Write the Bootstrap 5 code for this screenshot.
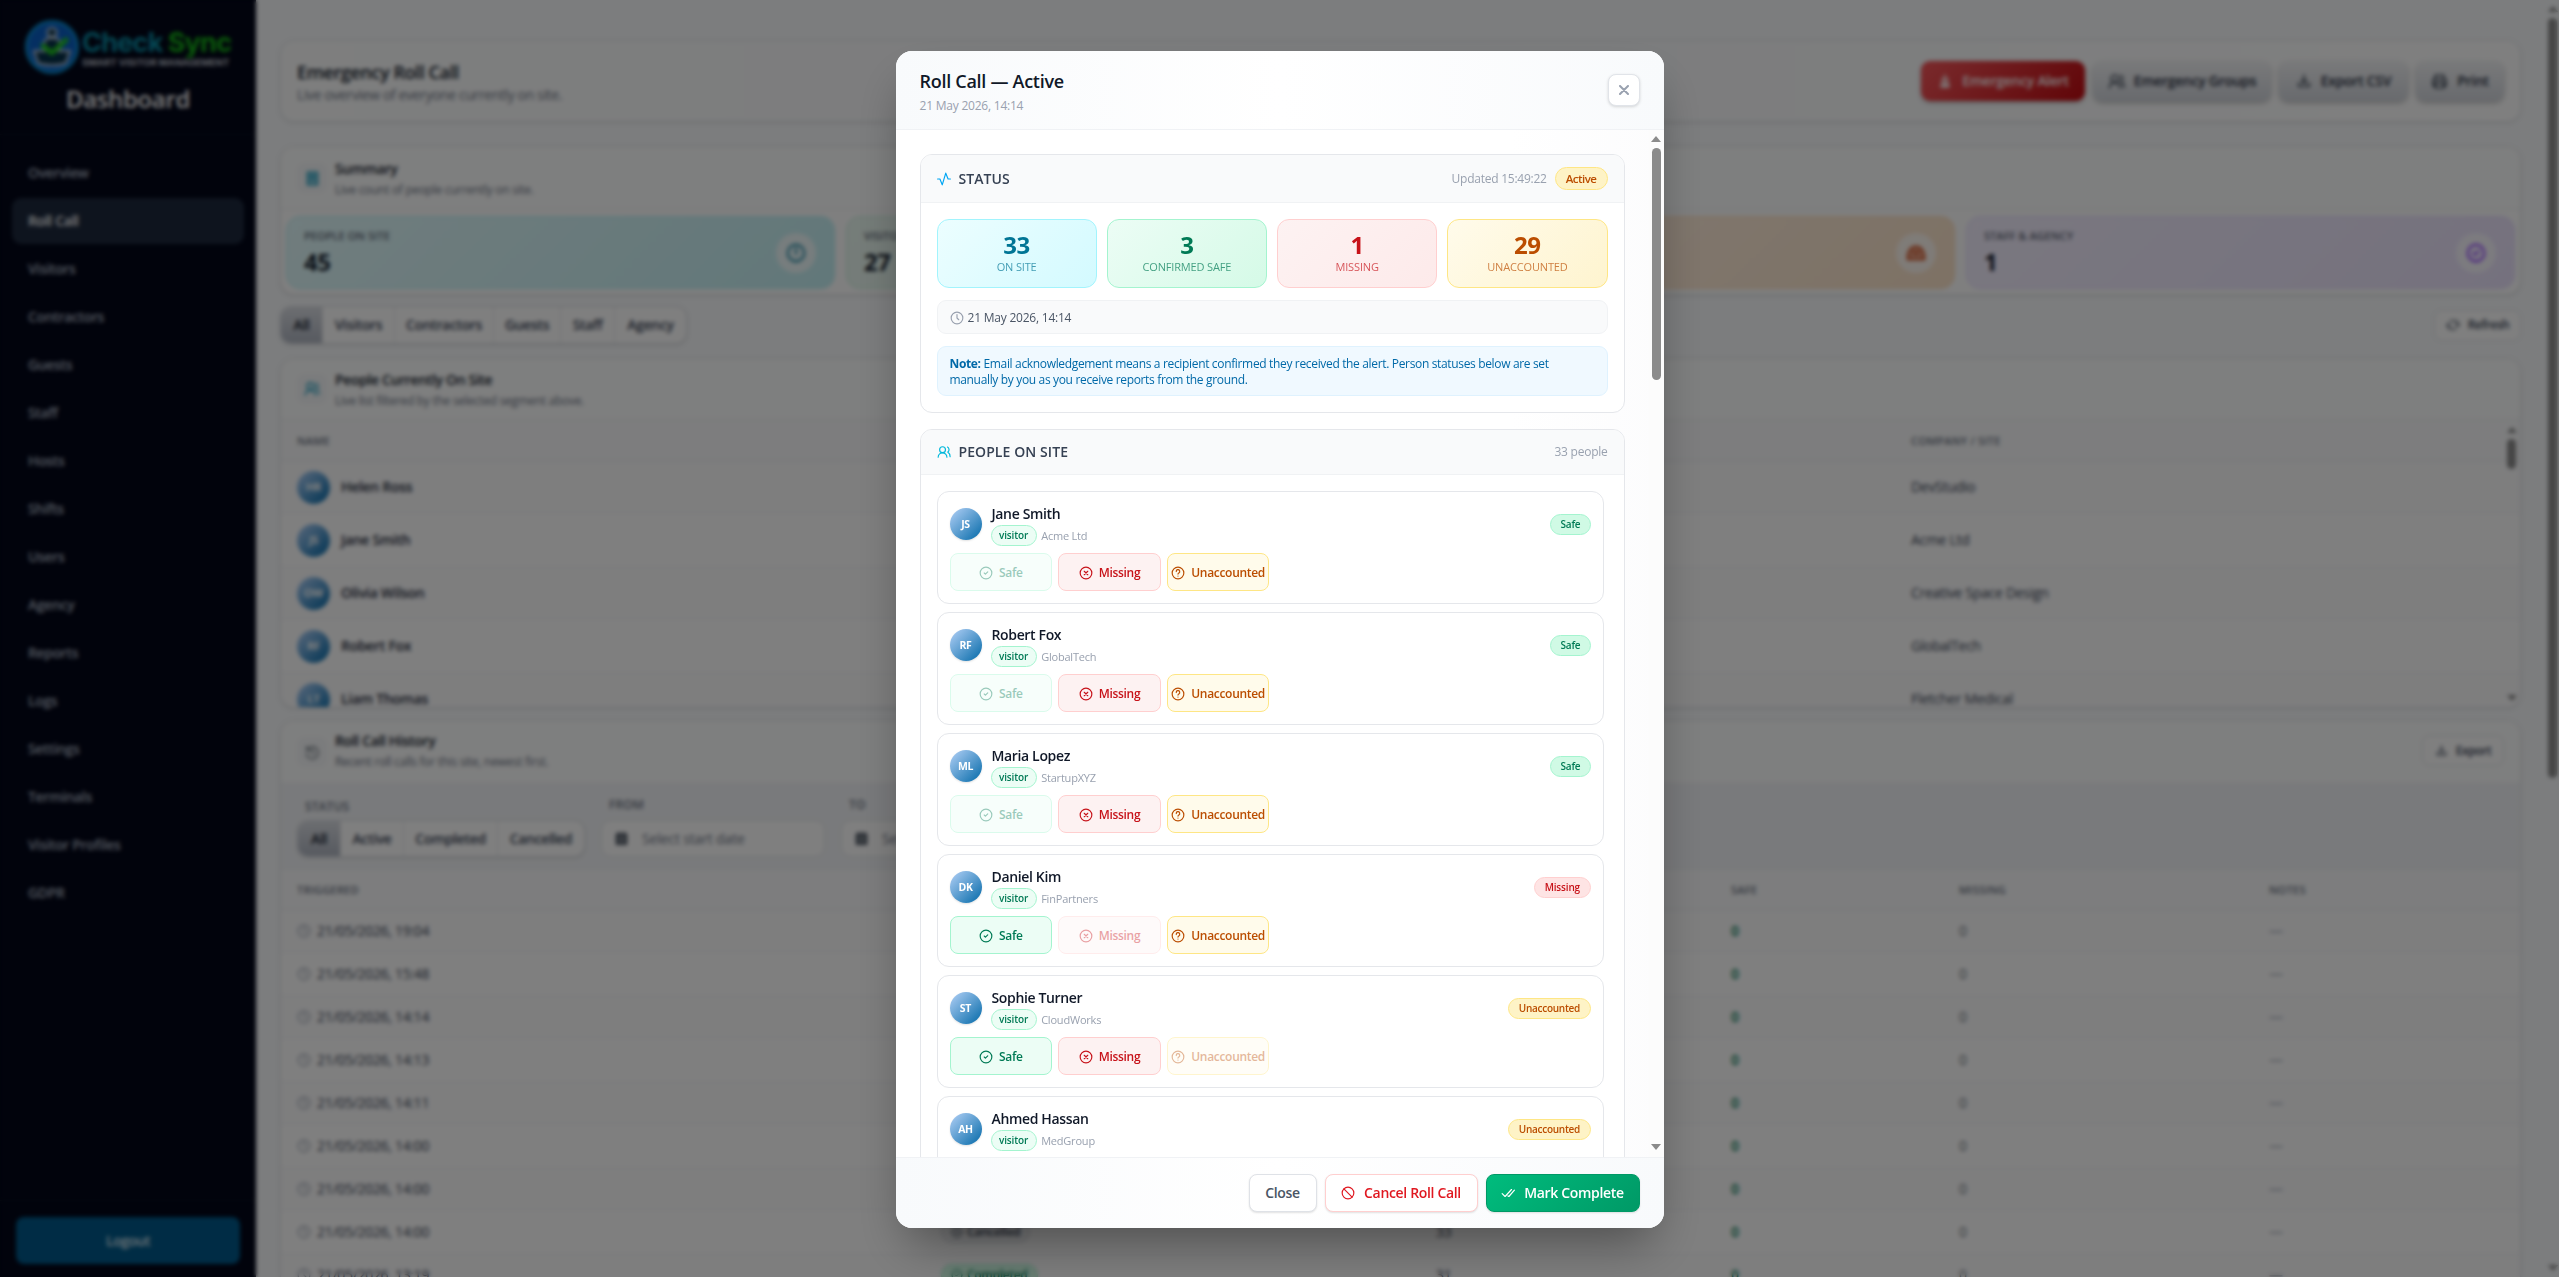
<!DOCTYPE html>
<html lang="en">
<head>
<meta charset="utf-8">
<meta name="viewport" content="width=device-width, initial-scale=1">
<title>Roll Call</title>
<link href="https://cdn.jsdelivr.net/npm/bootstrap@5.3.0/dist/css/bootstrap.min.css" rel="stylesheet">
<style>
:root{--ink:#101828;--mut:#99a1af;--line:#e5e7eb}
html,body{height:100%;overflow:hidden}
body{font-family:"Open Sans","Noto Sans",sans-serif;font-size:14px;line-height:20px;color:var(--ink);background:#f8fafc;letter-spacing:-.3px}
svg{flex:none;fill:none;stroke:currentColor;stroke-width:2;stroke-linecap:round;stroke-linejoin:round}
.fw-6{font-weight:600}
/* sidebar */
.side{width:256px;background:#020618;color:#cad5e2}
.side-top{height:135px;border-bottom:1px solid #0b1222;padding-top:20px}
.logo-name{font:700 27px/28px Inter,sans-serif;letter-spacing:-.75px;white-space:nowrap}
.logo-tag{font:700 9.5px/12px Inter,sans-serif;color:#b9bec8;white-space:nowrap;letter-spacing:-.05px}
.side-title{font-size:24px;line-height:32px;color:#fff;letter-spacing:-.35px}
.side-nav{padding:15px 12px 0;gap:2px}
.side-nav a{height:46px;line-height:46px;padding:0 16px;border-radius:9px;color:#aab4c3;text-decoration:none;font-weight:600;letter-spacing:-.35px}
.side-nav a.on{background:#1d293d;color:#fff}
.side-foot{height:77px;border-top:1px solid #0b1222;padding:16px}
.btn-out{height:47px;background:#00598a;color:#dce6ee;border-radius:8px;font-weight:600;width:100%;font-size:14px;letter-spacing:-.5px}
/* page */
.page{padding:40px 38px 0 24px}
.panel{background:#fff;border:1px solid var(--line);border-radius:14px;box-shadow:0 1px 3px rgba(0,0,0,.12);overflow:hidden}
.hero{height:82px;padding:0 16px;background:linear-gradient(90deg,#fcfdfd,#f8fafc 50%,#fff)}
.hero h1{font-size:18px;line-height:26px;margin:1px 0 0;font-weight:600;letter-spacing:-.4px}
.sub{color:#6a7282;line-height:20px;letter-spacing:-.38px}
.gbtn{height:40px;border-radius:9px;display:flex;align-items:center;gap:9px;font-weight:600;padding:0 15px;background:linear-gradient(#f3f4f6,#d1d5dc);color:#1e2939;box-shadow:0 2px 4px rgba(0,0,0,.25);justify-content:center;white-space:nowrap}
.gbtn.red{background:linear-gradient(135deg,#f4565a,#c10a10);color:#fff}
.ph{background:#fdfefe;border-bottom:1px solid #eef0f3;padding:0 16px}
.ph h2{font-size:14px;line-height:22px;font-weight:600;margin:0;letter-spacing:-.35px}
.ph .sub{font-size:12px;line-height:20px;letter-spacing:-.3px}
.pic{width:30px;height:30px;border-radius:8px;background:#f6f8fa;display:grid;place-items:center;color:#0092b8}
.stat{height:73px;border-radius:14px;border:1px solid;padding:0 18px 0 17px;flex:1}
.stat small{font-size:11px;line-height:16px;color:#5a6272;letter-spacing:.05px;font-weight:600;display:block;padding-top:2px}
.stat b{font-size:24px;line-height:36px;display:block;letter-spacing:-.5px}
.rnd{width:40px;height:40px;border-radius:50%;background:rgba(255,255,255,.7);display:grid;place-items:center}
.seg{height:38px;border:1px solid #d9dde3;border-radius:11px;overflow:hidden;background:#fff;box-shadow:0 1px 3px rgba(0,0,0,.15)}
.seg span{display:grid;place-items:center;font-weight:600;color:#364153;border-right:1px solid var(--line);letter-spacing:-.35px}
.seg span:last-child{border:0}
.seg .on{background:linear-gradient(#d9dce2,#aeb4c0);color:var(--ink)}
.obtn{border:1px solid #dfe2e7;border-radius:8px;background:#fff;height:31px;font-size:12px;font-weight:600;display:flex;align-items:center;justify-content:center;gap:8px;color:#364153;letter-spacing:-.4px}
.th-row{height:41px;background:#fafbfc;border-bottom:1px solid #e9ebef;font-size:11px;font-weight:600;color:#6a7282;padding:1px 16px 0;letter-spacing:.2px}
.tr-row{height:53px;padding:0 16px;border-bottom:1px solid #f3f4f6;color:#364153}
.tr-row:nth-child(odd){background:#fcfcfd}
.ava{width:33px;height:33px;border-radius:50%;background:linear-gradient(135deg,#b3d1f7,#0369a8);color:#fff;font-size:11px;font-weight:700;display:grid;place-items:center;letter-spacing:-.3px;flex:none}
.h-row{height:43px;padding:0 16px;border-bottom:1px solid #f3f4f6;color:#364153}
.h-row:nth-child(odd){background:#fcfcfd}
.c1{width:644px}.c2{width:495px}.c3{width:295px}.c4{width:228px}.c5{width:310px}
.chip{border:1px solid #d7dbe1;border-radius:12px;font-size:12px;line-height:20px;padding:0 9px;background:#f3f4f6;font-weight:600;display:inline-flex;align-items:center;gap:4px}
.chip.ok{background:#d0fae5;border-color:#a4f4cf;color:#007a55}
.filt{height:85px;background:#f3f5f8;border-bottom:1px solid #e9ebef;padding:13px 16px 0;gap:16px}
.filt label{font-size:12px;line-height:16px;color:#6a7282;font-weight:600;display:block;letter-spacing:.1px;margin-bottom:7px}
.inp{width:224px;height:37px;border:1px solid #dfe2e7;border-radius:10px;background:#fff;color:#6a7282;padding:0 12px;gap:13px;letter-spacing:-.15px}
.bar{background:#8b8b8b;border-radius:6px;width:9px}
.up,.dn{width:0;height:0;border:5px solid transparent}
.up{border-bottom:6px solid #8b8b8b;border-top:0}
.dn{border-top:6px solid #8b8b8b;border-bottom:0}
.page-bar{position:absolute;right:1px;top:6px;bottom:6px;width:11px}
.list-bar{position:absolute;right:3px;top:7px;bottom:7px;width:11px}
/* dialog */
.veil{background:rgba(0,0,0,.5);backdrop-filter:blur(2px);-webkit-backdrop-filter:blur(2px)}
.modal-content.dlg{width:768px;height:1177px;border:0;border-radius:16px;overflow:hidden;box-shadow:0 25px 50px -12px rgba(0,0,0,.4);color:var(--ink);margin:51px auto 0}
.dlg-head{height:79px;padding:0 24px;border-bottom:1px solid #f0f2f5;background:linear-gradient(90deg,#f8fafc,#fff 50%,#f8fafc)}
.dlg-head h5{font-size:18px;line-height:25px;font-weight:600;margin:3px 0 0;letter-spacing:-.28px}
.dlg-head p{font-size:12px;line-height:18px;color:var(--mut);margin:3px 0 0;letter-spacing:-.22px}
.xbtn{width:32px;height:32px;border:1px solid #e1e4e9;border-radius:8px;background:#fff;display:grid;place-items:center;color:var(--mut);box-shadow:0 1px 3px rgba(0,0,0,.15)}
.dlg-body{height:1027px;overflow:hidden;background:linear-gradient(90deg,#fff 80%,#fcfcfd)}
.dlg-col{padding:24px;width:753px}
.dlg-track{width:15px;background:#fcfcfc;padding:6px 0 7px}
.box{border:1px solid var(--line);border-radius:12px;overflow:hidden;background:#fff}
.box-h{height:48px;background:#f9fafb;border-bottom:1px solid #f0f2f4;padding:0 16px}
.box-h h6{font-size:14px;line-height:20px;font-weight:600;color:#364153;margin:0;letter-spacing:.08px}
.mute{font-size:12px;color:var(--mut);letter-spacing:-.25px}
.tile{height:69px;border:1px solid;border-radius:12px;flex:1;text-align:center;padding-top:9px}
.tile b{display:block;font-size:24px;line-height:32px;letter-spacing:-.3px}
.tile span{display:block;font-size:11px;line-height:12px;letter-spacing:-.15px;font-weight:500;opacity:.7}
.t-c{background:linear-gradient(135deg,#ecfeff,#d3faff);border-color:#a2f4fd;color:#007595}
.t-g{background:linear-gradient(135deg,#ecfdf5,#d5fae7);border-color:#a4f4cf;color:#007a55}
.t-r{background:linear-gradient(135deg,#fdf2f2,#fdeaea);border-color:#ffcfcf;color:#c71219}
.t-y{background:linear-gradient(135deg,#fffbeb,#fef4cf);border-color:#fee685;color:#bb4d00}
.when{height:34px;margin-top:12px;border:1px solid #f0f2f4;border-radius:9px;background:#f9fafb;padding:1px 12px 0;gap:4px;font-size:12px;color:#4a5565;letter-spacing:-.22px}
.note{height:50px;margin-top:12px;border:1px solid #dff2fe;border-radius:9px;background:#f0f9ff;padding:9px 12px;font-size:12px;line-height:16px;color:#0069a8;letter-spacing:-.34px}
.note b{font-weight:700}
.pcard{height:113px;border:1px solid var(--line);border-radius:12px;padding:16px 12px 0;margin-bottom:8px;background:#fff}
.pcard .ava{width:32px;height:32px;font-size:10.5px;box-shadow:0 1px 2px rgba(0,0,0,.12)}
.pname{font-weight:600;line-height:18px;letter-spacing:-.35px;margin-top:-3px}
.pill{border:1px solid;border-radius:11px;height:21px;line-height:19px;font-size:10px;font-weight:600;padding:0 7.5px;letter-spacing:-.15px;display:block}
.pill.sm-y{height:23px;line-height:21px;font-size:11.5px;padding:0 10px;border-radius:12px;letter-spacing:-.5px}
.p-role{background:#ecfdf5;border-color:#a4f4cf;color:#007a55}
.p-safe{background:#d0fae5;border-color:#a4f4cf;color:#007a55;padding:0 9px}
.p-miss{background:#fee4e4;border-color:#ffcfcf;color:#c71219;padding:0 9.5px}
.p-un{background:#fef3c6;border-color:#fee685;color:#bb4d00;padding:0 9.5px;letter-spacing:-.28px}
.co{font-size:11px;color:var(--mut);letter-spacing:-.2px;font-weight:400}
.act{width:102.5px;height:38px;border:1px solid;border-radius:8px;font-size:12px;font-weight:600;gap:6px;letter-spacing:-.3px;margin-right:6.2px;padding-top:1px}
.a-s{background:#ecfdf5;border-color:#a4f4cf;color:#007a55}
.a-m{background:#fdf2f2;border-color:#ffcfcf;color:#c71219}
.a-u{background:#fffbeb;border-color:#fee685;color:#bb4d00}
.off{opacity:.4}
.dlg-foot{height:71px;padding:0 24px;gap:8px;border-top:1px solid #f0f2f5;background:linear-gradient(90deg,#f8fafc,#fff 50%,#f8fafc)}
.fbtn{height:38px;border:1px solid #dfe2e7;border-radius:8px;background:#fff;font-weight:600;color:#4a5565;display:flex;align-items:center;justify-content:center;gap:9px;box-shadow:0 1px 2px rgba(0,0,0,.12);white-space:nowrap;letter-spacing:-.33px}
</style>
<script src="https://cdn.jsdelivr.net/npm/bootstrap@5.3.0/dist/js/bootstrap.bundle.min.js"></script>
</head>
<body>
<svg width="0" height="0" class="position-absolute">
  <defs>
    <symbol id="clock" viewBox="0 0 24 24"><circle cx="12" cy="12" r="10"/><path d="M12 6v6l3 3"/></symbol>
    <symbol id="people" viewBox="0 0 24 24"><path d="M17 21a7.5 7.5 0 0 0-15 0"/><circle cx="9.5" cy="8" r="5"/><path d="M22.500 20c0-3.500-2-6.500-4-8a5 5 0 0 0-.5-8.500"/></symbol>
    <symbol id="dl" viewBox="0 0 24 24"><path d="M12 3v12m-4-4 4 4 4-4M4 15v5h16v-5"/></symbol>
    <symbol id="ok" viewBox="0 0 24 24"><circle cx="12" cy="12" r="10"/><path d="m9 12 2 2 4-4"/></symbol>
    <symbol id="no" viewBox="0 0 24 24"><circle cx="12" cy="12" r="10"/><path d="m9 9 6 6m0-6-6 6"/></symbol>
    <symbol id="ask" viewBox="0 0 24 24"><circle cx="12" cy="12" r="10"/><path d="M9 9.500a3 3 0 1 1 4.500 2.300c-1 .600-1.500 1-1.500 2M12 17.200v.1"/></symbol>
    <symbol id="cal" viewBox="0 0 24 24"><path fill="currentColor" fill-opacity=".6" d="M4 5h16v16H4z"/><path d="M8 2v4m8-4v4"/></symbol>
  </defs>
</svg>

<div class="d-flex h-100 position-relative">
  <aside class="side d-flex flex-column flex-shrink-0">
    <div class="side-top">
      <div class="d-flex" style="padding-left:25px;gap:3px">
        <svg width="54" height="54" viewBox="0 0 54 54" stroke="none"><circle cx="27" cy="27" r="25.500" fill="#0b5fc4" stroke="#0a8fd0" stroke-width="3"/><circle cx="27" cy="12.500" r="4.500" fill="#06304a"/><path fill="#06304a" d="M19 25c0-6 3-7 8-7s8 1 8 7v6H19zM9 31h36l-4 12c-6 3-22 3-28 0z"/><path d="m18 26 9 7 14-13" fill="none" stroke="#1fc41f" stroke-width="5"/></svg>
        <div style="padding-top:9px"><div class="logo-name"><span style="color:#0b8fa8">Check</span><span style="color:#15b415;margin-left:5px">Sync</span></div><div class="logo-tag">SMART VISITOR MANAGEMENT</div></div>
      </div>
      <div class="side-title text-center fw-6" style="margin-top:9px">Dashboard</div>
    </div>
    <nav class="side-nav d-flex flex-column flex-grow-1" id="nav"></nav>
    <div class="side-foot"><button class="btn btn-out">Logout</button></div>
  </aside>

  <main class="page flex-grow-1">
    <section class="panel hero d-flex align-items-center justify-content-between">
      <div><h1>Emergency Roll Call</h1><div class="sub">Live overview of everyone currently on site.</div></div>
      <div class="d-flex gap-2">
        <div class="gbtn red" style="width:164px"><svg width="16" height="16" viewBox="0 0 24 24"><path fill="currentColor" fill-opacity=".5" d="M8 18v-7a4 4 0 0 1 8 0v7M6 21h12v-3H6zM12 2v2"/></svg>Emergency Alert</div>
        <div class="gbtn" style="width:178px"><svg width="17" height="17"><use href="#people"/></svg>Emergency Groups</div>
        <div class="gbtn" style="width:129px"><svg width="16" height="16"><use href="#dl"/></svg>Export CSV</div>
        <div class="gbtn" style="width:88px"><svg width="17" height="17" viewBox="0 0 24 24"><path d="M6 9V3h12v6M6 18H3V9h18v9h-3M6 14h12v7H6z"/></svg>Print</div>
      </div>
    </section>

    <section class="panel" style="margin-top:24px;height:149px">
      <div class="ph d-flex align-items-center gap-3" style="height:63px">
        <div class="pic"><svg width="17" height="17" viewBox="0 0 24 24"><path fill="currentColor" fill-opacity=".4" d="M5 3h14v18H5z"/><path d="M9 8h6M9 13h6"/></svg></div>
        <div style="margin-left:-8px;padding-top:1px"><h2>Summary</h2><div class="sub">Live count of people currently on site.</div></div>
      </div>
      <div class="d-flex" style="gap:11px;padding:6px 5px" id="stats"></div>
    </section>

    <div class="d-flex justify-content-between align-items-center" style="margin:11px 0 14px">
      <div class="seg d-flex"><span class="on" style="width:42px">All</span><span style="width:72px">Visitors</span><span style="width:99px">Contractors</span><span style="width:67px">Guests</span><span style="width:54px">Staff</span><span style="width:71px">Agency</span></div>
      <div class="obtn" style="width:87px"><svg width="14" height="14" viewBox="0 0 24 24"><path d="M7 5h10a3 3 0 0 1 3 3v6m-3-3 3 3 3-3M17 19H7a3 3 0 0 1-3-3v-6m-3 3 3-3 3 3"/></svg>Refresh</div>
    </div>

    <section class="panel" style="height:350px">
      <div class="ph d-flex align-items-center gap-3" style="height:61px">
        <div class="pic"><svg width="16" height="16"><use href="#people"/></svg></div>
        <div style="margin-left:-8px;padding-top:1px"><h2>People Currently On Site</h2><div class="sub">Live list filtered by the selected segment above.</div></div>
      </div>
      <div class="position-relative" style="height:288px">
        <div class="th-row d-flex align-items-center"><div style="width:1614px">NAME</div><div>COMPANY / SITE</div></div>
        <div id="on-site"></div>
        <div class="list-bar d-flex flex-column align-items-center"><i class="up"></i><i class="bar" style="height:30px;margin-top:6px"></i><i class="dn mt-auto"></i></div>
      </div>
    </section>

    <section class="panel" style="height:620px;margin-top:12px">
      <div class="ph d-flex align-items-center gap-3" style="height:63px">
        <div class="pic text-secondary"><svg width="16" height="16" viewBox="0 0 24 24"><path d="M4 4v5h5M4.500 9a9 9 0 1 1-1 5M12 8v5l3 2"/></svg></div>
        <div style="margin:-2px 0 0 -8px"><h2>Roll Call History</h2><div class="sub">Recent roll calls for this site, newest first.</div></div>
        <div class="obtn ms-auto" style="width:82px;margin-top:-3px"><svg width="13" height="13"><use href="#dl"/></svg>Export</div>
      </div>
      <div class="filt d-flex">
        <div><label style="padding:2px 0 0 8px;margin-bottom:5px">STATUS</label><div class="seg d-flex" style="height:37px"><span class="on" style="width:43px">All</span><span style="width:63px">Active</span><span style="width:94px">Completed</span><span style="width:86px">Cancelled</span></div></div>
        <div><label style="padding-left:8px">FROM</label><div class="inp d-flex align-items-center"><svg width="15" height="15" color="#1e2939"><use href="#cal"/></svg>Select start date</div></div>
        <div><label style="padding-left:8px">TO</label><div class="inp d-flex align-items-center"><svg width="15" height="15" color="#1e2939"><use href="#cal"/></svg>Select end date</div></div>
      </div>
      <div class="th-row d-flex align-items-center"><div class="c1">TRIGGERED</div><div class="c2">STATUS</div><div class="c3">TOTAL</div><div class="c4">SAFE</div><div class="c5">MISSING</div><div>NOTES</div></div>
      <div id="history"></div>
    </section>
  </main>
  <div class="page-bar d-flex flex-column align-items-center"><i class="up"></i><i class="bar" style="height:760px;margin-top:6px"></i><i class="dn mt-auto"></i></div>
</div>

<div class="modal d-block veil overflow-hidden">
  <div class="modal-content dlg">
    <div class="dlg-head d-flex align-items-center justify-content-between">
      <div><h5>Roll Call — Active</h5><p>21 May 2026, 14:14</p></div>
      <div class="xbtn"><svg width="10" height="10" viewBox="0 0 10 10" stroke-width="1.200"><path d="m1 1 8 8M9 1 1 9"/></svg></div>
    </div>
    <div class="dlg-body d-flex">
      <div class="dlg-col">
        <div class="box" style="height:259px">
          <div class="box-h d-flex align-items-center">
            <svg width="14" height="14" viewBox="0 0 24 24" color="#00a6f4" style="margin-right:8px"><path d="M1 12h4l4 10 6-20 4 10h4"/></svg><h6>STATUS</h6>
            <span class="mute ms-auto" style="margin-right:8px">Updated 15:49:22</span><span class="pill sm-y p-un">Active</span>
          </div>
          <div style="padding:16px">
            <div class="d-flex" style="gap:10px">
              <div class="tile t-c"><b>33</b><span>ON SITE</span></div>
              <div class="tile t-g"><b>3</b><span>CONFIRMED SAFE</span></div>
              <div class="tile t-r"><b>1</b><span>MISSING</span></div>
              <div class="tile t-y"><b>29</b><span>UNACCOUNTED</span></div>
            </div>
            <div class="when d-flex align-items-center"><svg width="14" height="14" stroke-width="1.600" color="#99a1af"><use href="#clock"/></svg>21 May 2026, 14:14</div>
            <div class="note"><b>Note:</b> Email acknowledgement means a recipient confirmed they received the alert. Person statuses below are set<br>manually by you as you receive reports from the ground.</div>
          </div>
        </div>
        <div class="box" style="margin-top:16px;height:900px">
          <div class="box-h d-flex align-items-center" style="height:45px">
            <svg width="14" height="14" color="#00b8db" style="margin-right:8px"><use href="#people"/></svg><h6>PEOPLE ON SITE</h6>
            <span class="mute ms-auto">33 people</span>
          </div>
          <div style="padding:16px 20px 0 16px" id="roll"></div>
        </div>
      </div>
      <div class="dlg-track d-flex flex-column align-items-center"><i class="up"></i><i class="bar" style="height:232px;margin-top:6px"></i><i class="dn mt-auto"></i></div>
    </div>
    <div class="dlg-foot d-flex align-items-center justify-content-end">
      <div class="fbtn" style="width:68px">Close</div>
      <div class="fbtn" style="width:153px;color:#e01820;border-color:#ffcfcf"><svg width="14" height="14" viewBox="0 0 24 24"><circle cx="12" cy="12" r="10"/><path d="m5 5 14 14"/></svg>Cancel Roll Call</div>
      <div class="fbtn" style="width:154px;color:#fff;border-color:#009966;background:linear-gradient(135deg,#00bc7d,#009966)"><svg width="14" height="14" viewBox="0 0 24 24"><path d="m2 13 5 5L18 6M12 17l1.500 1L23 7"/></svg>Mark Complete</div>
    </div>
  </div>
</div>

<script>
const put = (id, html) => document.getElementById(id).innerHTML = html;
const ini = n => n.split(' ').map(w => w[0]).join('');

put('nav', ['Overview','Roll Call','Visitors','Contractors','Guests','Staff','Hosts','Shifts','Users','Agency','Reports','Logs','Settings','Terminals','Visitor Profiles','GDPR']
  .map((t, i) => `<a href="#" class="${i == 1 ? 'on' : ''}">${t}</a>`).join(''));

put('stats', [
  ['PEOPLE ON SITE', 45, '#e2fafc,#c4f0f4', '#b5eef3', '#007595', '<circle cx="12" cy="12" r="9"/><path d="M12 7v6"/>'],
  ['VISITORS', 27, '#ecfaf3,#dcf5ea', '#c5eedb', '#007a55', '<circle cx="12" cy="12" r="9"/>'],
  ['CONTRACTORS', 17, '#fff3e6,#fde4ca', '#fbdcbb', '#ca3500', '<path fill="currentColor" fill-opacity=".4" d="M3 19v-3c0-6 4-11 9-11s9 5 9 11v3z"/><path d="M9 12h6"/>'],
  ['STAFF &amp; AGENCY', 1, '#f4f0ff,#ebe3fd', '#e2d8fb', '#7f22fe', '<circle cx="12" cy="12" r="9"/><path d="m9 12 2 2 4-4"/>']
].map(([l, n, g, b, c, p]) => `<div class="stat d-flex align-items-center justify-content-between" style="background:linear-gradient(135deg,${g});border-color:${b}"><div><small>${l}</small><b>${n}</b></div><div class="rnd" style="color:${c}"><svg width="22" height="22" viewBox="0 0 24 24">${p}</svg></div></div>`).join(''));

put('on-site', [['Helen Ross','DevStudio'],['Jane Smith','Acme Ltd'],['Olivia Wilson','Creative Space Design'],['Robert Fox','GlobalTech'],['Liam Thomas','Fletcher Medical']]
  .map(([n, c]) => `<div class="tr-row d-flex align-items-center"><div class="d-flex align-items-center fw-6" style="width:1614px;gap:11px;color:#1e2939"><span class="ava">${ini(n)}</span>${n}</div><div>${c}</div></div>`).join(''));

put('history', ['19:04','15:48','14:14','14:13','14:11','14:00','14:00','14:00','13:19']
  .map((t, i) => `<div class="h-row d-flex align-items-center"><div class="c1 d-flex align-items-center" style="gap:6px"><svg width="14" height="14" color="#99a1af"><use href="#clock"/></svg>21/05/2026, ${t}</div><div class="c2"><span class="chip ${i == 8 ? 'ok' : ''}"><svg width="12" height="12"><use href="#${i == 8 ? 'ok' : 'no'}"/></svg>${i == 8 ? 'Completed' : 'Cancelled'}</span></div><div class="c3">${i == 8 ? 31 : 33}</div><div class="c4 fw-6" style="color:#007a55">0</div><div class="c5 text-secondary">0</div><div style="color:#99a1af">—</div></div>`).join(''));

const st = {s: ['p-safe', 'Safe'], m: ['p-miss', 'Missing'], u: ['p-un', 'Unaccounted']};
put('roll', [['Jane Smith','Acme Ltd','s'],['Robert Fox','GlobalTech','s'],['Maria Lopez','StartupXYZ','s'],['Daniel Kim','FinPartners','m'],['Sophie Turner','CloudWorks','u'],['Ahmed Hassan','MedGroup','u']]
  .map(([n, c, s]) => `<div class="pcard">
    <div class="d-flex" style="height:45px"><span class="ava">${ini(n)}</span>
      <div style="margin-left:10px"><div class="pname">${n}</div><div class="d-flex align-items-center" style="gap:4.5px;margin:2px 0 0 -1px"><span class="pill p-role">visitor</span><span class="co">${c}</span></div></div>
      <div class="ms-auto" style="padding-top:6px"><span class="pill ${st[s][0]}">${st[s][1]}</span></div></div>
    <div class="d-flex">` +
    [['s','a-s','ok'],['m','a-m','no'],['u','a-u','ask']].map(([k, a, i]) => `<div class="act ${a} ${k == s ? 'off' : ''} d-flex align-items-center justify-content-center"><svg width="14" height="14"><use href="#${i}"/></svg>${st[k][1]}</div>`).join('') +
    `</div></div>`).join(''));
</script>
</body>
</html>
